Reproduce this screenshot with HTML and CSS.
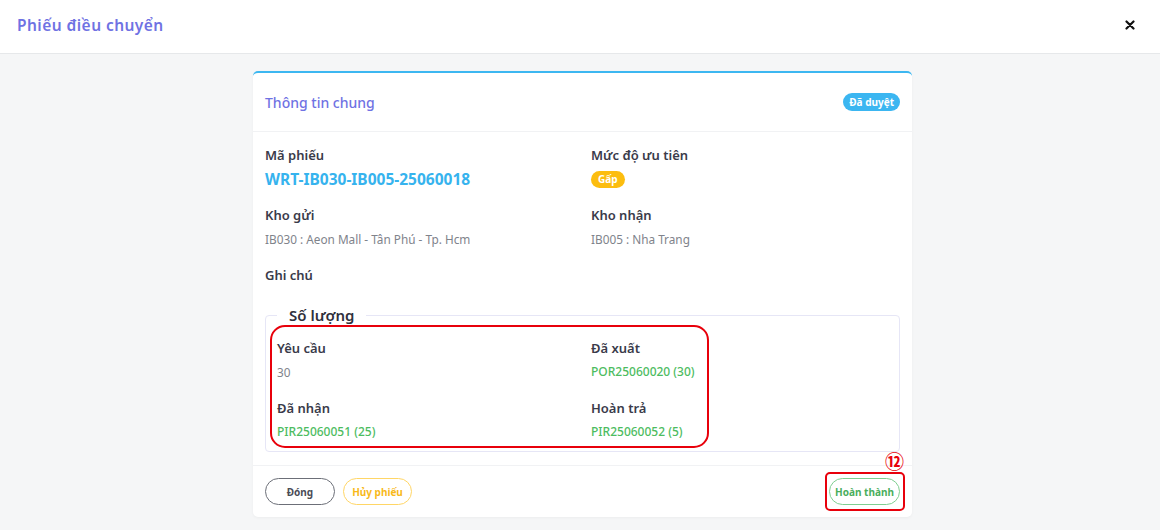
FILE: index.html
```html
<!DOCTYPE html>
<html lang="vi">
<head>
<meta charset="utf-8">
<title>Phiếu điều chuyển</title>
<link rel="stylesheet" href="styles.css">
</head>
<body>
<div class="modal">
  <header class="modal-header">
    <h1 class="modal-title">Phiếu điều chuyển</h1>
    <button class="close-btn" aria-label="Đóng">
      <svg width="10" height="10" viewBox="0 0 10 10"><path d="M1.5 1.5L8.5 8.5M8.5 1.5L1.5 8.5" stroke="#111" stroke-width="2.2" stroke-linecap="round"/></svg>
    </button>
  </header>
  <main class="modal-body">
    <section class="card">
      <div class="card-header">
        <h2 class="card-title">Thông tin chung</h2>
        <span class="badge badge-info">Đã duyệt</span>
      </div>
      <div class="card-body">
        <div class="grid">
          <div class="field">
            <div class="label">Mã phiếu</div>
            <div class="value code">WRT-IB030-IB005-25060018</div>
          </div>
          <div class="field">
            <div class="label">Mức độ ưu tiên</div>
            <div class="value"><span class="badge badge-warning">Gấp</span></div>
          </div>
          <div class="field">
            <div class="label">Kho gửi</div>
            <div class="value">IB030 : Aeon Mall - Tân Phú - Tp. Hcm</div>
          </div>
          <div class="field">
            <div class="label">Kho nhận</div>
            <div class="value">IB005 : Nha Trang</div>
          </div>
          <div class="field field-note">
            <div class="label">Ghi chú</div>
          </div>
        </div>
        <fieldset class="qty">
          <legend>Số lượng</legend>
          <div class="grid grid-qty">
            <div class="field">
              <div class="label">Yêu cầu</div>
              <div class="value">30</div>
            </div>
            <div class="field">
              <div class="label">Đã xuất</div>
              <div class="value ok">POR25060020 (30)</div>
            </div>
            <div class="field last">
              <div class="label">Đã nhận</div>
              <div class="value ok">PIR25060051 (25)</div>
            </div>
            <div class="field last">
              <div class="label">Hoàn trả</div>
              <div class="value ok">PIR25060052 (5)</div>
            </div>
          </div>
          <span class="mark mark-qty"></span>
        </fieldset>
      </div>
      <div class="card-footer">
        <div class="actions">
          <button class="btn btn-dark">Đóng</button>
          <button class="btn btn-yellow">Hủy phiếu</button>
        </div>
        <div class="done-wrap">
          <span class="step">⑫</span>
          <span class="mark mark-done"></span>
          <button class="btn btn-green">Hoàn thành</button>
        </div>
      </div>
    </section>
  </main>
</div>
</body>
</html>
```

FILE: styles.css
```css
* { box-sizing: border-box; }
html, body { margin: 0; padding: 0; }
body {
  width: 1160px;
  height: 530px;
  overflow: hidden;
  background: #f5f6f7;
  font-family: "Noto Sans", "Open Sans", sans-serif;
  color: #333;
}
.modal { display: flex; flex-direction: column; height: 530px; }
.modal-header {
  height: 54px;
  flex: none;
  background: #fff;
  border-bottom: 1px solid #e6e8ea;
  display: flex;
  align-items: center;
  justify-content: space-between;
  padding: 0 25px 3px 17px;
}
.modal-title {
  margin: 0;
  font-size: 15.5px;
  font-weight: 600;
  letter-spacing: 0.45px;
  color: #6f72e3;
}
.close-btn {
  border: 0;
  background: none;
  padding: 0;
  width: 10px;
  height: 10px;
  display: flex;
}
.modal-body {
  flex: 1;
  padding: 17px 0 0 5px;
}
.card {
  width: 659px;
  margin: 0 auto;
  background: #fff;
  border-top: 2px solid #3cb7f1;
  border-radius: 5px;
  box-shadow: 0 1px 3px rgba(0,0,0,0.04);
}
.card-header {
  height: 59px;
  display: flex;
  align-items: center;
  justify-content: space-between;
  padding: 0 12px;
  border-bottom: 1px solid #f1f2f4;
}
.card-title {
  margin: 0;
  font-size: 14px;
  font-weight: 500;
  color: #6f72e3;
}
.badge {
  display: inline-flex;
  align-items: center;
  height: 18px;
  padding: 0 6px;
  border-radius: 9px;
  color: #fff;
  font-size: 10px;
  font-weight: 700;
}
.badge-info { background: #3bb6f1; }
.badge-warning { background: #fcbd0f; height: 17px; padding: 0 7px; }
.card-body { padding: 13px 12px 13px; }
.grid {
  display: grid;
  grid-template-columns: 326px 1fr;
}
.field { margin-bottom: 16px; }
.field-note { margin-bottom: 16px; }
.label {
  height: 20px;
  line-height: 20px;
  margin-bottom: 4px;
  font-size: 13px;
  font-weight: 600;
  color: #3a3b4a;
}
.value {
  height: 20px;
  line-height: 20px;
  font-size: 11.8px;
  color: #80838b;
  display: flex;
  align-items: center;
}
.value.code {
  font-size: 15.5px;
  font-weight: 700;
  color: #36b3ee;
}
.value.ok { color: #4dbc5f; font-weight: 500; font-size: 12px; }
.qty {
  position: relative;
  margin: 0;
  padding: 0 11px 9px;
  border: 1px solid #e6e6f6;
  border-radius: 4px;
}
.qty legend {
  padding: 0 12px;
  height: 20px;
  line-height: 20px;
  font-size: 15px;
  font-weight: 600;
  color: #2f303c;
}
.grid-qty {
  grid-template-columns: 314px 1fr;
  padding-top: 13px;
}
.field.last { margin-bottom: 0; }
.card-footer {
  border-top: 1px solid #f1f2f4;
  display: flex;
  justify-content: space-between;
  align-items: center;
  padding: 12px 12px 12px;
}
.actions { display: flex; gap: 8px; }
.btn {
  height: 27px;
  border-radius: 14px;
  background: #fff;
  font-family: inherit;
  font-size: 10px;
  font-weight: 700;
  padding: 0;
  white-space: nowrap;
  cursor: pointer;
}
.btn-dark { border: 1px solid #6c6f78; color: #4a4c56; width: 70px; }
.btn-yellow { border: 1px solid #ffd666; color: #f8b91a; width: 69px; }
.btn-green { border: 1px solid #7fcf91; color: #4aae5c; width: 71px; }
.done-wrap { position: relative; display: flex; }
.mark {
  position: absolute;
  border: 2px solid #e8000b;
  pointer-events: none;
}
.mark-qty {
  left: 4px;
  top: 0;
  width: 439px;
  height: 123px;
  border-radius: 15px;
}
.mark-done {
  left: -4px;
  top: -6px;
  width: 80px;
  height: 39px;
  border-radius: 5px;
}
.step {
  position: absolute;
  right: -4px;
  top: -27px;
  font-family: "Noto Sans CJK JP", "DejaVu Sans", sans-serif;
  font-size: 19px;
  font-weight: 700;
  color: #e8000b;
  line-height: 19px;
}
```
